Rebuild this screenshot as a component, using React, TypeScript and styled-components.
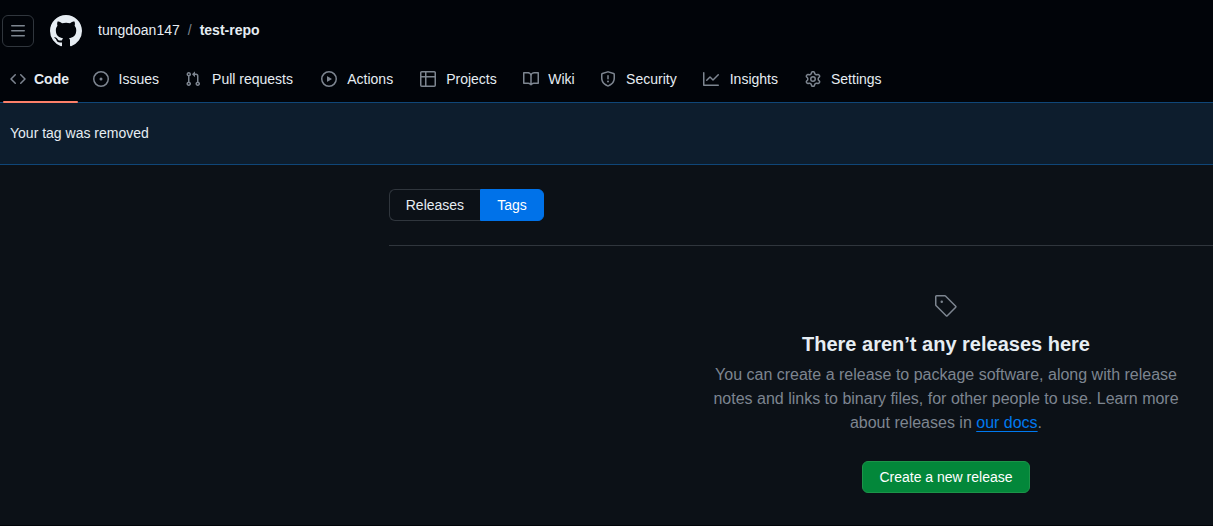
import React from "react";
import styled, { createGlobalStyle } from "styled-components";

const GlobalStyle = createGlobalStyle`
  * { box-sizing: border-box; }
  html, body { margin: 0; overflow: hidden; background: #0c1117; }
  body {
    color: #e6edf3;
    font-family: "Liberation Sans", Arial, sans-serif;
    font-size: 14px;
    line-height: 21px;
  }
`;

const Page = styled.div`
  height: 526px;
  overflow: hidden;
  display: flex;
  flex-direction: column;
`;

const Header = styled.header`
  flex: none;
  height: 102px;
  background: #010409;
`;

const TopBar = styled.div`
  display: flex;
  align-items: center;
  height: 32px;
  margin-top: 15px;
  padding-left: 2px;
`;

const HeaderInner = styled.div`
  display: flow-root;
`;

const MenuButton = styled.button`
  display: flex;
  align-items: center;
  justify-content: center;
  width: 32px;
  height: 32px;
  padding: 0;
  color: #7d8590;
  background: transparent;
  border: 1px solid #30363d;
  border-radius: 6px;
`;

const Logo = styled.a`
  display: flex;
  margin-left: 16px;
  color: #e6edf3;
`;

const Breadcrumb = styled.nav`
  display: flex;
  align-items: center;
  margin: -2px 0 0 12px;
`;

const Crumb = styled.a<{ $current?: boolean }>`
  padding: 0 4px;
  font-weight: ${(p) => (p.$current ? 700 : 400)};
`;

const Slash = styled.span`
  padding: 0 4px;
  color: #7d8590;
`;

const Tabs = styled.nav`
  display: flex;
  gap: 8px;
  height: 48px;
  margin-top: 8px;
  padding-left: 2px;
`;

const Tab = styled.a<{ $active?: boolean }>`
  position: relative;
  display: flex;
  align-items: center;
  gap: 8px;
  padding: 0 8px;
  white-space: nowrap;
  font-weight: ${(p) => (p.$active ? 700 : 400)};

  svg { color: #7d8590; }

  &::after {
    content: "";
    display: ${(p) => (p.$active ? "block" : "none")};
    position: absolute;
    z-index: 1;
    left: 0.5px;
    right: -0.5px;
    bottom: 0;
    height: 2px;
    background: #fd8069;
    border-radius: 6px;
  }
`;

/* Reserves the bold width so a tab keeps its size when it becomes active. */
const TabLabel = styled.span`
  text-align: center;

  &::before {
    content: attr(data-content);
    display: block;
    height: 0;
    font-weight: 700;
    visibility: hidden;
  }
`;

const Flash = styled.div`
  flex: none;
  height: 63px;
  padding: 20px 10px;
  background: #0d1d2d;
  border: solid #0f4678;
  border-width: 1px 0;
`;

const Content = styled.main`
  flex: none;
  width: 1114.5px;
  height: 360px;
  margin-left: 388.75px;
  padding-top: 24px;
`;

const Subnav = styled.div`
  display: flex;
  height: 57px;
  border-bottom: 1px solid #30363d;
`;

const SubnavItem = styled.a<{ $selected?: boolean }>`
  height: 32px;
  padding: 5px 16px;
  line-height: 20px;
  color: ${(p) => (p.$selected ? "#ffffff" : "#e6edf3")};
  background: ${(p) => (p.$selected ? "#0072e9" : "transparent")};
  border: 1px solid ${(p) => (p.$selected ? "#0072e9" : "#30363d")};

  &:first-child { border-radius: 6px 0 0 6px; border-right: 0; }
  &:last-child { border-radius: 0 6px 6px 0; }
`;

const Blankslate = styled.section`
  display: flex;
  flex-direction: column;
  align-items: center;
  padding-top: 48px;
  text-align: center;
`;

const TagIconWrap = styled.div`
  display: flex;
  color: #7d8590;
`;

const Heading = styled.h3`
  margin: 11px 0 4px;
  font-size: 20px;
  line-height: 30px;
`;

const Description = styled.p`
  width: 485px;
  margin: 0;
  color: #7d8590;
  font-size: 16px;
  line-height: 24px;
`;

const DocsLink = styled.a`
  color: #0079f0;
  text-decoration: underline;
  text-underline-offset: 3px;
`;

const CreateButton = styled.button`
  height: 32px;
  margin-top: 26px;
  padding: 0 16px;
  color: #ffffff;
  font: inherit;
  background: #03873a;
  border: 1px solid #1c9449;
  border-radius: 6px;
`;

const BottomEdge = styled.footer`
  flex: none;
  height: 1px;
  background: #010409;
`;

function Icon({ d, size = 16, box = 16 }: { d: string; size?: number; box?: number }) {
  return (
    <svg width={size} height={size} viewBox={`0 0 ${box} ${box}`} fill="currentColor" aria-hidden="true">
      <path d={d} />
    </svg>
  );
}

const paths = {
  menu: "M1 2.75A.75.75 0 0 1 1.75 2h12.5a.75.75 0 0 1 0 1.5H1.75A.75.75 0 0 1 1 2.75Zm0 5A.75.75 0 0 1 1.75 7h12.5a.75.75 0 0 1 0 1.5H1.75A.75.75 0 0 1 1 7.75ZM1.75 12h12.5a.75.75 0 0 1 0 1.5H1.75a.75.75 0 0 1 0-1.5Z",
  github: "M8 0c4.42 0 8 3.58 8 8a8.013 8.013 0 0 1-5.45 7.59c-.4.08-.55-.17-.55-.38 0-.27.01-1.13.01-2.2 0-.75-.25-1.23-.54-1.48 1.78-.2 3.65-.88 3.65-3.95 0-.88-.31-1.59-.82-2.15.08-.2.36-1.02-.08-2.12 0 0-.67-.22-2.2.82-.64-.18-1.32-.27-2-.27-.68 0-1.36.09-2 .27-1.53-1.03-2.2-.82-2.2-.82-.44 1.1-.16 1.92-.08 2.12-.51.56-.82 1.28-.82 2.15 0 3.06 1.86 3.75 3.64 3.95-.23.2-.44.55-.51 1.07-.46.21-1.61.55-2.33-.66-.15-.24-.6-.83-1.23-.82-.67.01-.27.38.01.53.34.19.73.9.82 1.13.16.45.68 1.31 2.69.94 0 .67.01 1.3.01 1.49 0 .21-.15.45-.55.38A7.995 7.995 0 0 1 0 8c0-4.42 3.58-8 8-8Z",
  code: "m11.28 3.22 4.25 4.25a.75.75 0 0 1 0 1.06l-4.25 4.25a.749.749 0 0 1-1.275-.326.749.749 0 0 1 .215-.734L13.94 8l-3.72-3.72a.749.749 0 0 1 .326-1.275.749.749 0 0 1 .734.215Zm-6.56 0a.751.751 0 0 1 1.042.018.751.751 0 0 1 .018 1.042L2.06 8l3.72 3.72a.749.749 0 0 1-.326 1.275.749.749 0 0 1-.734-.215L.47 8.53a.75.75 0 0 1 0-1.06Z",
  issues: "M8 9.5a1.5 1.5 0 1 0 0-3 1.5 1.5 0 0 0 0 3ZM8 0a8 8 0 1 1 0 16A8 8 0 0 1 8 0ZM1.5 8a6.5 6.5 0 1 0 13 0 6.5 6.5 0 0 0-13 0Z",
  pulls: "M1.5 3.25a2.25 2.25 0 1 1 3 2.122v5.256a2.251 2.251 0 1 1-1.5 0V5.372A2.25 2.25 0 0 1 1.5 3.25Zm5.677-.177L9.573.677A.25.25 0 0 1 10 .854V2.5h1A2.5 2.5 0 0 1 13.5 5v5.628a2.251 2.251 0 1 1-1.5 0V5a1 1 0 0 0-1-1h-1v1.646a.25.25 0 0 1-.427.177L7.177 3.427a.25.25 0 0 1 0-.354ZM3.75 2.5a.75.75 0 1 0 0 1.5.75.75 0 0 0 0-1.5Zm0 9.5a.75.75 0 1 0 0 1.5.75.75 0 0 0 0-1.5Zm8.25.75a.75.75 0 1 0 1.5 0 .75.75 0 0 0-1.5 0Z",
  actions: "M8 0a8 8 0 1 1 0 16A8 8 0 0 1 8 0ZM1.5 8a6.5 6.5 0 1 0 13 0 6.5 6.5 0 0 0-13 0Zm4.879-2.773 4.264 2.559a.25.25 0 0 1 0 .428l-4.264 2.559A.25.25 0 0 1 6 10.559V5.442a.25.25 0 0 1 .379-.215Z",
  projects: "M0 1.75C0 .784.784 0 1.75 0h12.5C15.216 0 16 .784 16 1.75v12.5A1.75 1.75 0 0 1 14.25 16H1.75A1.75 1.75 0 0 1 0 14.25ZM6.5 6.5v8h7.75a.25.25 0 0 0 .25-.25V6.5Zm8-1.5V1.75a.25.25 0 0 0-.25-.25H6.5V5Zm-13 1.5v7.75c0 .138.112.25.25.25H5v-8ZM5 5V1.5H1.75a.25.25 0 0 0-.25.25V5Z",
  wiki: "M0 1.75A.75.75 0 0 1 .75 1h4.253c1.227 0 2.317.59 3 1.501A3.743 3.743 0 0 1 11.006 1h4.245a.75.75 0 0 1 .75.75v10.5a.75.75 0 0 1-.75.75h-4.507a2.25 2.25 0 0 0-1.591.659l-.622.621a.75.75 0 0 1-1.06 0l-.622-.621A2.25 2.25 0 0 0 5.258 13H.75a.75.75 0 0 1-.75-.75Zm7.251 10.324.004-5.073-.002-2.253A2.25 2.25 0 0 0 5.003 2.5H1.5v9h3.757a3.75 3.75 0 0 1 1.994.574ZM8.755 4.75l-.004 7.322a3.752 3.752 0 0 1 1.992-.572H14.5v-9h-3.495a2.25 2.25 0 0 0-2.25 2.25Z",
  security: "M7.467.133a1.748 1.748 0 0 1 1.066 0l5.25 1.68A1.75 1.75 0 0 1 15 3.48V7c0 1.566-.32 3.182-1.303 4.682-.983 1.498-2.585 2.813-5.032 3.855a1.697 1.697 0 0 1-1.33 0c-2.447-1.042-4.049-2.357-5.032-3.855C1.32 10.182 1 8.566 1 7V3.48a1.75 1.75 0 0 1 1.217-1.667Zm.61 1.429a.25.25 0 0 0-.153 0l-5.25 1.68a.25.25 0 0 0-.174.238V7c0 1.358.275 2.666 1.057 3.86.784 1.194 2.121 2.34 4.366 3.297a.196.196 0 0 0 .154 0c2.245-.956 3.582-2.104 4.366-3.298C13.225 9.666 13.5 8.36 13.5 7V3.48a.251.251 0 0 0-.174-.237l-5.25-1.68ZM8.75 4.75v3a.75.75 0 0 1-1.5 0v-3a.75.75 0 0 1 1.5 0ZM9 10.5a1 1 0 1 1-2 0 1 1 0 0 1 2 0Z",
  insights: "M1.5 1.75V13.5h13.75a.75.75 0 0 1 0 1.5H.75a.75.75 0 0 1-.75-.75V1.75a.75.75 0 0 1 1.5 0Zm14.28 2.53-5.25 5.25a.75.75 0 0 1-1.06 0L7 7.06 4.28 9.78a.751.751 0 0 1-1.042-.018.751.751 0 0 1-.018-1.042l3.25-3.25a.75.75 0 0 1 1.06 0L10 7.94l4.72-4.72a.751.751 0 0 1 1.042.018.751.751 0 0 1 .018 1.042Z",
  settings: "M8 0a8.2 8.2 0 0 1 .701.031C9.444.095 9.99.645 10.16 1.29l.288 1.107c.018.066.079.158.212.224.231.114.454.243.668.386.123.082.233.09.299.071l1.103-.303c.644-.176 1.392.021 1.82.63.27.385.506.792.704 1.218.315.675.111 1.422-.364 1.891l-.814.806c-.049.048-.098.147-.088.294.016.257.016.515 0 .772-.01.147.038.246.088.294l.814.806c.475.469.679 1.216.364 1.891a7.977 7.977 0 0 1-.704 1.217c-.428.61-1.176.807-1.82.63l-1.102-.302c-.067-.019-.177-.011-.3.071a5.909 5.909 0 0 1-.668.386c-.133.066-.194.158-.211.224l-.29 1.106c-.168.646-.715 1.196-1.458 1.26a8.006 8.006 0 0 1-1.402 0c-.743-.064-1.289-.614-1.458-1.26l-.289-1.106c-.018-.066-.079-.158-.212-.224a5.738 5.738 0 0 1-.668-.386c-.123-.082-.233-.09-.299-.071l-1.103.303c-.644.176-1.392-.021-1.82-.63a8.12 8.12 0 0 1-.704-1.218c-.315-.675-.111-1.422.363-1.891l.815-.806c.05-.048.098-.147.088-.294a6.214 6.214 0 0 1 0-.772c.01-.147-.038-.246-.088-.294l-.815-.806C.635 6.045.431 5.298.746 4.623a7.92 7.92 0 0 1 .704-1.217c.428-.61 1.176-.807 1.82-.63l1.102.302c.067.019.177.011.3-.071.214-.143.437-.272.668-.386.133-.066.194-.158.211-.224l.29-1.106C6.009.645 6.556.095 7.299.03 7.53.01 7.764 0 8 0Zm-.571 1.525c-.036.003-.108.036-.137.146l-.289 1.105c-.147.561-.549.967-.998 1.189-.173.086-.34.183-.5.29-.417.278-.97.423-1.529.27l-1.103-.303c-.109-.03-.175.016-.195.045-.22.312-.412.644-.573.99-.014.031-.021.11.059.19l.815.806c.411.406.562.957.53 1.456a4.709 4.709 0 0 0 0 .582c.032.499-.119 1.05-.53 1.456l-.815.806c-.081.08-.073.159-.059.19.162.346.353.677.573.989.02.03.085.076.195.046l1.102-.303c.56-.153 1.113-.008 1.53.27.161.107.328.204.501.29.447.222.85.629.997 1.189l.289 1.105c.029.109.101.143.137.146a6.6 6.6 0 0 0 1.142 0c.036-.003.108-.036.137-.146l.289-1.105c.147-.561.549-.967.998-1.189.173-.086.34-.183.5-.29.417-.278.97-.423 1.529-.27l1.103.303c.109.029.175-.016.195-.045.22-.313.411-.644.573-.99.014-.031.021-.11-.059-.19l-.815-.806c-.411-.406-.562-.957-.53-1.456a4.709 4.709 0 0 0 0-.582c-.032-.499.119-1.05.53-1.456l.815-.806c.081-.08.073-.159.059-.19a6.464 6.464 0 0 0-.573-.989c-.02-.03-.085-.076-.195-.046l-1.102.303c-.56.153-1.113.008-1.53-.27a4.44 4.44 0 0 0-.501-.29c-.447-.222-.85-.629-.997-1.189l-.289-1.105c-.029-.11-.101-.143-.137-.146a6.6 6.6 0 0 0-1.142 0ZM11 8a3 3 0 1 1-6 0 3 3 0 0 1 6 0ZM9.5 8a1.5 1.5 0 1 0-3.001.001A1.5 1.5 0 0 0 9.5 8Z",
  tag: "M7.75 6.5a1.25 1.25 0 1 1 0 2.5 1.25 1.25 0 0 1 0-2.5ZM2.5 1h8.44a1.5 1.5 0 0 1 1.06.44l10.25 10.25a1.5 1.5 0 0 1 0 2.12l-8.44 8.44a1.5 1.5 0 0 1-2.12 0L1.44 12A1.497 1.497 0 0 1 1 10.94V2.5A1.5 1.5 0 0 1 2.5 1Zm0 1.5v8.44l10.25 10.25 8.44-8.44L10.94 2.5Z",
};

const tabs = [
  { label: "Code", icon: paths.code },
  { label: "Issues", icon: paths.issues },
  { label: "Pull requests", icon: paths.pulls },
  { label: "Actions", icon: paths.actions },
  { label: "Projects", icon: paths.projects },
  { label: "Wiki", icon: paths.wiki },
  { label: "Security", icon: paths.security },
  { label: "Insights", icon: paths.insights },
  { label: "Settings", icon: paths.settings },
];

export default function App() {
  return (
    <Page>
      <GlobalStyle />
      <Header>
        <HeaderInner>
          <TopBar>
            <MenuButton aria-label="Open navigation menu">
              <Icon d={paths.menu} />
            </MenuButton>
            <Logo>
              <Icon d={paths.github} size={32} />
            </Logo>
            <Breadcrumb>
              <Crumb>tungdoan147</Crumb>
              <Slash>/</Slash>
              <Crumb $current>test-repo</Crumb>
            </Breadcrumb>
          </TopBar>
          <Tabs>
            {tabs.map((tab, i) => (
              <Tab key={tab.label} $active={i === 0}>
                <Icon d={tab.icon} />
                <TabLabel data-content={tab.label}>{tab.label}</TabLabel>
              </Tab>
            ))}
          </Tabs>
        </HeaderInner>
      </Header>
      <Flash>Your tag was removed</Flash>
      <Content>
        <Subnav>
          <SubnavItem>Releases</SubnavItem>
          <SubnavItem $selected>Tags</SubnavItem>
        </Subnav>
        <Blankslate>
          <TagIconWrap>
            <Icon d={paths.tag} size={24} box={24} />
          </TagIconWrap>
          <Heading>There aren’t any releases here</Heading>
          <Description>
            You can create a release to package software, along with release notes and links to binary files, for other
            people to use. Learn more about releases in <DocsLink>our docs</DocsLink>.
          </Description>
          <CreateButton>Create a new release</CreateButton>
        </Blankslate>
      </Content>
      <BottomEdge />
    </Page>
  );
}
